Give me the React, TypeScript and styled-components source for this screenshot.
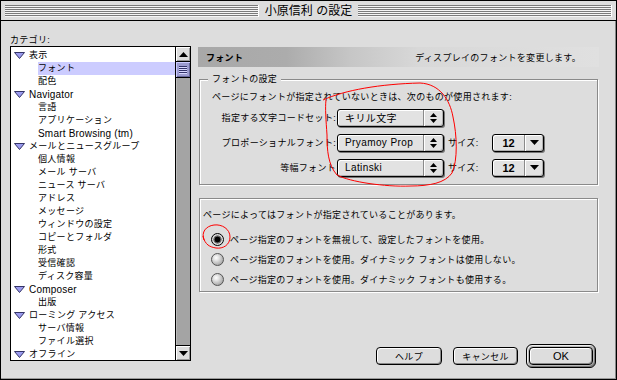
import React from "react";
import styled, { createGlobalStyle } from "styled-components";

const GlobalStyle = createGlobalStyle`
  html, body { margin: 0; padding: 0; background: #dddddd; }
  body {
    font-family: "Liberation Sans", "Noto Sans CJK JP", sans-serif;
    font-size: 9px;
    letter-spacing: 0.3px;
    color: #000;
  }
  * { box-sizing: border-box; }
`;

interface TreeItem {
  label: string;
  level: 0 | 1;
  selected?: boolean;
}

const tree: TreeItem[] = [
  { label: "表示", level: 0 },
  { label: "フォント", level: 1, selected: true },
  { label: "配色", level: 1 },
  { label: "Navigator", level: 0 },
  { label: "言語", level: 1 },
  { label: "アプリケーション", level: 1 },
  { label: "Smart Browsing (tm)", level: 1 },
  { label: "メールとニュースグループ", level: 0 },
  { label: "個人情報", level: 1 },
  { label: "メール サーバ", level: 1 },
  { label: "ニュース サーバ", level: 1 },
  { label: "アドレス", level: 1 },
  { label: "メッセージ", level: 1 },
  { label: "ウィンドウの設定", level: 1 },
  { label: "コピーとフォルダ", level: 1 },
  { label: "形式", level: 1 },
  { label: "受信確認", level: 1 },
  { label: "ディスク容量", level: 1 },
  { label: "Composer", level: 0 },
  { label: "出版", level: 1 },
  { label: "ローミング アクセス", level: 0 },
  { label: "サーバ情報", level: 1 },
  { label: "ファイル選択", level: 1 },
  { label: "オフライン", level: 0 },
];

const radios = [
  "ページ指定のフォントを無視して、設定したフォントを使用。",
  "ページ指定のフォントを使用。ダイナミック フォントは使用しない。",
  "ページ指定のフォントを使用。ダイナミック フォントも使用する。",
];

const isLatin = (s: string) => /^[\x20-\x7e]+$/.test(s);

const Window = styled.div`
  position: relative;
  width: 617px;
  height: 380px;
  border: 1px solid #000;
  background: #dddddd;
  display: flex;
  flex-direction: column;
  overflow: hidden;
`;

const TitleBar = styled.div`
  height: 20px;
  border-bottom: 1px solid #000;
  display: flex;
  align-items: center;
  padding: 0 4px;
  background: #dddddd;
`;

const Stripes = styled.div`
  flex: 1;
  height: 12px;
  background: repeating-linear-gradient(to bottom, #7a7a7a 0 1px, #f4f4f4 1px 2px);
  border-right: 1px solid #fff;
`;

const TitleText = styled.div`
  font-size: 12px;
  letter-spacing: 0;
  padding: 0 6px;
  line-height: 14px;
`;

const Body = styled.div`
  flex: 1;
  display: flex;
  border-right: 1px solid #888;
  border-bottom: 1px solid #999;
`;

const LeftColumn = styled.div`
  width: 190px;
  padding: 14px 0 0 9px;
  display: flex;
  flex-direction: column;
`;

const CategoryLabel = styled.div`
  height: 11px;
  line-height: 10px;
`;

const ListBox = styled.div`
  width: 181px;
  height: 315px;
  border: 1px solid #000;
  display: flex;
`;

const ListItems = styled.div`
  flex: 1;
  background: #fff;
  padding-top: 2px;
  overflow: hidden;
`;

const Row = styled.div<{ $level: number }>`
  height: 13px;
  display: flex;
  align-items: center;
  padding-left: ${(p) => (p.$level === 0 ? 3 : 27)}px;
  white-space: nowrap;
`;

const RowLabel = styled.div<{ $selected?: boolean; $latin?: boolean }>`
  flex: 1;
  height: 13px;
  line-height: 13px;
  font-size: ${(p) => (p.$latin ? 10 : 9)}px;
  letter-spacing: ${(p) => (p.$latin ? 0.2 : 0.3)}px;
  background: ${(p) => (p.$selected ? "#ccccff" : "transparent")};
`;

const Twisty = styled.svg`
  width: 11px;
  height: 7px;
  margin-right: 4px;
  flex: none;
`;

const ScrollBar = styled.div`
  width: 15px;
  border-left: 1px solid #000;
  display: flex;
  flex-direction: column;
  background: #a0a0a0;
`;

const ScrollArrow = styled.div<{ $down?: boolean }>`
  height: 15px;
  flex: none;
  background: #dddddd;
  box-shadow: inset 1px 1px 0 #fff, inset -1px -1px 0 #999;
  ${(p) => (p.$down ? "border-top: 1px solid #000;" : "border-bottom: 1px solid #000;")}
  display: flex;
  align-items: center;
  justify-content: center;
`;

const Thumb = styled.div`
  height: 16px;
  flex: none;
  background: #9c9cd0;
  border-bottom: 1px solid #000;
  box-shadow: inset 1px 1px 0 #ccccff, inset -1px -1px 0 #66669a;
  display: flex;
  flex-direction: column;
  align-items: center;
  justify-content: center;
  gap: 1px;
`;

const Grip = styled.div`
  width: 8px;
  height: 1px;
  background: #33336a;
  box-shadow: 0 1px 0 #d8d8ff;
`;

const Track = styled.div`
  flex: 1;
  background: #a4a4a4;
  box-shadow: inset 1px 0 0 #bbb;
`;

const RightColumn = styled.div`
  width: 401px;
  margin-left: 7px;
  padding-top: 26px;
  display: flex;
  flex-direction: column;
`;

const Header = styled.div`
  height: 20px;
  display: flex;
  align-items: center;
  justify-content: space-between;
  padding: 0 18px 0 8px;
  background: linear-gradient(to right, #a8a8a8 0, #acacac 22%, #c6c6c6 38%, #d8d8d8 55%, #e0e0e0 100%);
`;

const HeaderTitle = styled.div`
  font-weight: bold;
`;

const Group = styled.div<{ $height: number }>`
  position: relative;
  margin: 0 1px;
  height: ${(p) => p.$height}px;
  border: 1px solid #8a8a8a;
  box-shadow: inset 1px 1px 0 #fff, 1px 1px 0 #fff;
`;

const GroupOne = styled(Group)`
  margin-top: 12px;
  padding: 11px 0 0 12px;
`;

const GroupTwo = styled(Group)`
  margin-top: 13px;
  padding: 10px 0 0 3px;
`;

const Legend = styled.div`
  position: absolute;
  top: -7px;
  left: 8px;
  padding: 0 4px;
  line-height: 12px;
  background: #dddddd;
`;

const Line = styled.div`
  height: 12px;
  line-height: 12px;
  white-space: nowrap;
`;

const FontGrid = styled.div`
  margin-top: 5px;
  display: grid;
  grid-template-columns: 125px 107px 48px 52px;
  grid-auto-rows: 19px;
  row-gap: 6px;
  align-items: center;
`;

const FieldLabel = styled.div`
  text-align: right;
  padding-right: 1px;
  white-space: nowrap;
`;

const SizeLabel = styled.div`
  padding-left: 4px;
  white-space: nowrap;
`;

const Popup = styled.div`
  height: 18px;
  border: 1px solid #000;
  border-radius: 3px;
  background: #e2e2e2;
  box-shadow: 1px 1px 0 #777, inset 1px 1px 0 #fff, inset -1px -1px 0 #b0b0b0;
  display: flex;
  align-items: center;
`;

const PopupValue = styled.div`
  flex: 1;
  padding-left: 7px;
  font-size: 10px;
  letter-spacing: 0.4px;
  white-space: nowrap;
`;

const SizeValue = styled.div`
  flex: 1;
  text-align: center;
  font-size: 11px;
  font-weight: bold;
  letter-spacing: 0;
`;

const PopupArrows = styled.div<{ $w: number }>`
  width: ${(p) => p.$w}px;
  height: 100%;
  border-left: 1px solid #8a8a8a;
  box-shadow: inset 1px 0 0 #fff;
  display: flex;
  flex-direction: column;
  align-items: center;
  justify-content: center;
  gap: 2px;
`;

const Arrow = styled.svg`
  display: block;
`;

const RadioList = styled.div`
  margin-top: 8px;
  margin-left: 8px;
  display: flex;
  flex-direction: column;
`;

const RadioRow = styled.div`
  height: 20px;
  display: flex;
  align-items: center;
  gap: 6px;
  white-space: nowrap;
`;

const RadioDot = styled.div<{ $checked?: boolean }>`
  width: 13px;
  height: 13px;
  border-radius: 50%;
  flex: none;
  border: 1px solid ${(p) => (p.$checked ? "#000" : "#555")};
  background: ${(p) =>
    p.$checked
      ? "radial-gradient(circle at 50% 50%, #000 0 2.6px, #666 3.2px 3.8px, #d8d8d8 4.4px)"
      : "radial-gradient(circle at 38% 35%, #fff 0, #e6e6e6 25%, #a8a8a8 75%, #777 100%)"};
`;

const ButtonRow = styled.div`
  margin-top: auto;
  padding: 0 3px 10px 0;
  display: flex;
  align-items: center;
  justify-content: flex-end;
  gap: 11px;
`;

const Button = styled.div<{ $w: number }>`
  width: ${(p) => p.$w}px;
  height: 18px;
  border: 1px solid #000;
  border-radius: 4px;
  background: #dddddd;
  box-shadow: inset 1px 1px 0 #fff, inset -1px -1px 0 #888;
  display: flex;
  align-items: center;
  justify-content: center;
  white-space: nowrap;
`;

const OkLabel = styled.span`
  font-size: 11px;
  letter-spacing: 0;
`;

const DefaultRing = styled.div`
  margin-left: -3px;
  padding: 2px;
  border: 1px solid #000;
  border-radius: 6px;
  background: #b8b8b8;
  box-shadow: inset 1px 1px 0 #eee, inset -1px -1px 0 #777;
`;

const Annotation = styled.svg`
  position: absolute;
  left: -1px;
  top: -1px;
  pointer-events: none;
`;

function UpDown() {
  return (
    <>
      <Arrow width="7" height="4" viewBox="0 0 7 4"><polygon points="0,4 7,4 3.5,0" fill="#000" /></Arrow>
      <Arrow width="7" height="4" viewBox="0 0 7 4"><polygon points="0,0 7,0 3.5,4" fill="#000" /></Arrow>
    </>
  );
}

function PopupMenu({ value }: { value: string }) {
  return (
    <Popup>
      <PopupValue>{value}</PopupValue>
      <PopupArrows $w={20}><UpDown /></PopupArrows>
    </Popup>
  );
}

function SizeMenu() {
  return (
    <Popup>
      <SizeValue>12</SizeValue>
      <PopupArrows $w={19}>
        <Arrow width="9" height="5" viewBox="0 0 9 5"><polygon points="0,0 9,0 4.5,5" fill="#000" /></Arrow>
      </PopupArrows>
    </Popup>
  );
}

export default function App() {
  return (
    <>
      <GlobalStyle />
      <Window>
        <TitleBar>
          <Stripes />
          <TitleText>小原信利 の設定</TitleText>
          <Stripes />
        </TitleBar>
        <Body>
          <LeftColumn>
            <CategoryLabel>カテゴリ:</CategoryLabel>
            <ListBox>
              <ListItems>
                {tree.map((item, i) => (
                  <Row key={i} $level={item.level}>
                    {item.level === 0 && (
                      <Twisty viewBox="0 0 11 7">
                        <polygon points="0.5,0.5 10.5,0.5 5.5,6.5" fill="#9a9aee" stroke="#333366" strokeWidth="1" />
                      </Twisty>
                    )}
                    <RowLabel $selected={item.selected} $latin={isLatin(item.label)}>{item.label}</RowLabel>
                  </Row>
                ))}
              </ListItems>
              <ScrollBar>
                <ScrollArrow>
                  <Arrow width="9" height="5" viewBox="0 0 9 5"><polygon points="0,5 9,5 4.5,0" fill="#000" /></Arrow>
                </ScrollArrow>
                <Thumb>
                  <Grip /><Grip /><Grip /><Grip />
                </Thumb>
                <Track />
                <ScrollArrow $down>
                  <Arrow width="9" height="5" viewBox="0 0 9 5"><polygon points="0,0 9,0 4.5,5" fill="#000" /></Arrow>
                </ScrollArrow>
              </ScrollBar>
            </ListBox>
          </LeftColumn>
          <RightColumn>
            <Header>
              <HeaderTitle>フォント</HeaderTitle>
              <div>ディスプレイのフォントを変更します。</div>
            </Header>
            <GroupOne $height={106}>
              <Legend>フォントの設定</Legend>
              <Line>ページにフォントが指定されていないときは、次のものが使用されます:</Line>
              <FontGrid>
                <FieldLabel>指定する文字コードセット:</FieldLabel>
                <PopupMenu value="キリル文字" />
                <div />
                <div />
                <FieldLabel>プロポーショナルフォント:</FieldLabel>
                <PopupMenu value="Pryamoy Prop" />
                <SizeLabel>サイズ:</SizeLabel>
                <SizeMenu />
                <FieldLabel>等幅フォント</FieldLabel>
                <PopupMenu value="Latinski" />
                <SizeLabel>サイズ:</SizeLabel>
                <SizeMenu />
              </FontGrid>
            </GroupOne>
            <GroupTwo $height={94}>
              <Line>ページによってはフォントが指定されていることがあります。</Line>
              <RadioList>
                {radios.map((r, i) => (
                  <RadioRow key={i}>
                    <RadioDot $checked={i === 0} />
                    <span>{r}</span>
                  </RadioRow>
                ))}
              </RadioList>
            </GroupTwo>
            <ButtonRow>
              <Button $w={66}>ヘルプ</Button>
              <Button $w={65}>キャンセル</Button>
              <DefaultRing>
                <Button $w={64}><OkLabel>OK</OkLabel></Button>
              </DefaultRing>
            </ButtonRow>
          </RightColumn>
        </Body>
        <Annotation width="617" height="380" viewBox="0 0 617 380">
          <path
            d="M 323 100 C 345 90, 380 84, 420 83 C 440 84, 450 100, 453 117 C 457 135, 458 160, 452 173 C 445 183, 430 186, 410 186 C 385 187, 350 182, 337 175 C 328 165, 327 150, 327 135 C 326 120, 325 108, 326 100"
            fill="none"
            stroke="#ff0000"
            strokeWidth="1"
          />
          <path
            d="M 204 240 C 201 232, 206 226, 214 225 C 222 224, 230 229, 230 237 C 230 245, 223 249, 216 248 C 210 247, 205 245, 203 236"
            fill="none"
            stroke="#ff0000"
            strokeWidth="1"
          />
        </Annotation>
      </Window>
    </>
  );
}
